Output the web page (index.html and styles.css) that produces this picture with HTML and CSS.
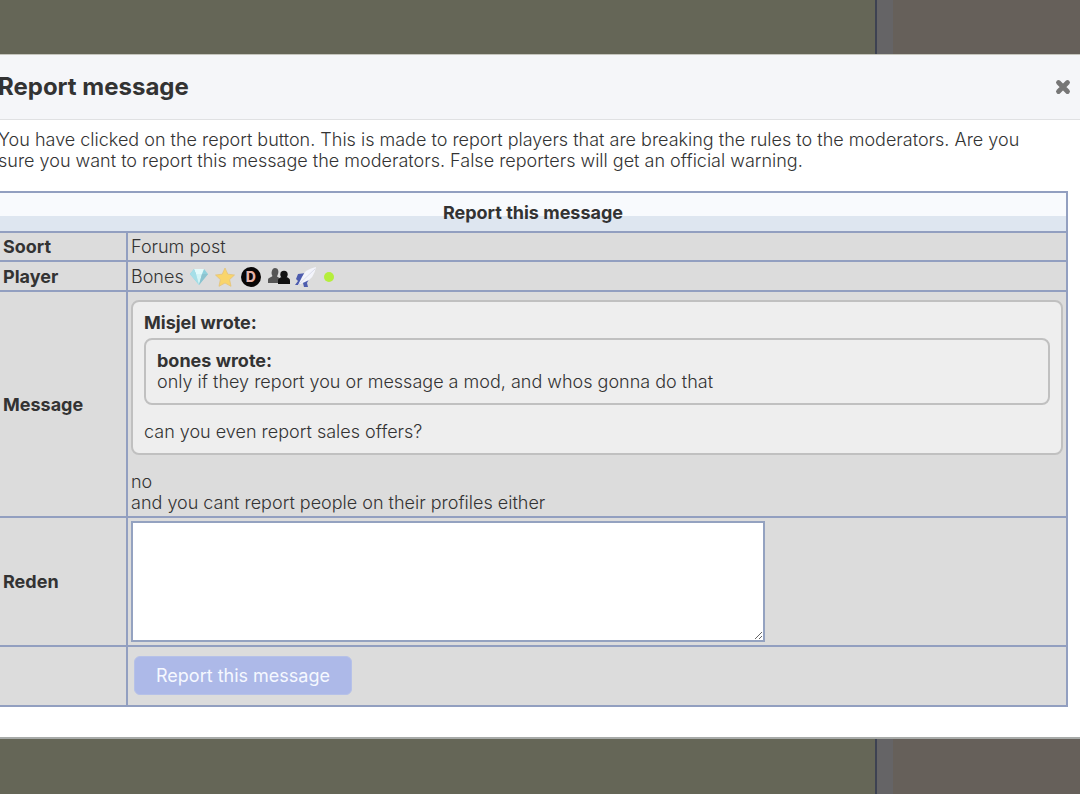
FILE: index.html
```
<!DOCTYPE html>
<html lang="en">
<head>
  <meta charset="UTF-8">
  <meta name="viewport" content="width=device-width, initial-scale=1.0">
  <title>Report message</title>
  <link rel="stylesheet" href="styles.css">
</head>

<body>
  <div class="page">
    <div class="page-content"></div>
    <div class="page-gutter"></div>
    <div class="page-side"></div>
  </div>

  <div class="overlay">
    <div class="modal" role="dialog" aria-labelledby="modal-title">
      <div class="modal-header">
        <h1 id="modal-title">Report message</h1>
        <button type="button" class="close" aria-label="Close">
          <svg width="16" height="16" viewBox="0 0 16 16">
            <path d="M3.500 3.500L12.500 12.500M12.500 3.500L3.500 12.500" stroke="#777" stroke-width="4.800" stroke-linecap="round"/>
          </svg>
        </button>
      </div>

      <form class="modal-body">
        <p>You have clicked on the report button. This is made to report players that are breaking the rules to the moderators. Are you<br>sure you want to report this message the moderators. False reporters will get an official warning.</p>

        <table>
          <thead>
            <tr><th colspan="2">Report this message</th></tr>
          </thead>
          <tbody>
            <tr>
              <th>Soort</th>
              <td>Forum post</td>
            </tr>
            <tr class="row-player">
              <th>Player</th>
              <td>
                <div class="player">
                  <span class="name">Bones</span>
                  <!-- diamond -->
                  <svg width="20" height="20" viewBox="0 0 20 20">
                    <path d="M5 2H15L19 7L10 18L1 7Z" fill="#8fd0dc"/>
                    <path d="M5 2H15L13 7H7Z" fill="#e4fafb"/>
                    <path d="M1 7L5 2L7 7L10 18Z" fill="#a5dfe8"/>
                    <path d="M7 7H13L10 18Z" fill="#d3f4f6"/>
                    <path d="M13 7H19L10 18Z" fill="#8cc3cf"/>
                  </svg>
                  <!-- star -->
                  <svg width="20" height="20" viewBox="0 0 20 20">
                    <path d="M10 1L12.8 7.2L19.5 8L14.6 12.6L16 19.3L10 16L4 19.3L5.4 12.6L.5 8L7.2 7.2Z" fill="#f9d56b" stroke="#e3c37b" stroke-width=".8" stroke-linejoin="round"/>
                  </svg>
                  <!-- donator -->
                  <span class="badge">D</span>
                  <!-- friends -->
                  <svg width="24" height="20" viewBox="0 0 24 20">
                    <path d="M8 1C11 1 12 4 11 7L10 9.500L12.500 11V16H1V13C1 10.500 4 10.500 5.500 9C3.500 6 5 1 8 1Z" fill="#555"/>
                    <circle cx="17" cy="7.500" r="3.700" fill="#111"/>
                    <path d="M15 10H19Q23 11 23 13.500V17H11V13.500Q11 11 15 10Z" fill="#111"/>
                  </svg>
                  <!-- feather -->
                  <svg class="feather" width="22" height="22" viewBox="0 0 22 22">
                    <path d="M3 8L11 7L8 13L14 13L12 17L13 21H9L8 17L5 17L4 19H0L3 15L1 13Z" fill="#4d5cae"/>
                    <path d="M21 1Q10 3 7 11L3 19L10 16Q19 13 21 1Z" fill="#f3f4fb"/>
                    <path d="M20 3L3 19" stroke="#d3d6e6" stroke-width=".8"/>
                  </svg>
                  <!-- online -->
                  <svg width="12" height="12" viewBox="0 0 12 12">
                    <circle cx="6" cy="6" r="5" fill="#b5ee3c"/>
                  </svg>
                </div>
              </td>
            </tr>
            <tr class="row-message">
              <th>Message</th>
              <td>
                <div class="quote">
                  <strong>Misjel wrote:</strong>
                  <div class="quote quote-inner">
                    <strong>bones wrote:</strong>
                    <div>only if they report you or message a mod, and whos gonna do that</div>
                  </div>
                  <div>can you even report sales offers?</div>
                </div>
                <div class="reply">no<br>and you cant report people on their profiles either</div>
              </td>
            </tr>
            <tr>
              <th><label for="reason">Reden</label></th>
              <td><textarea id="reason"></textarea></td>
            </tr>
            <tr>
              <th></th>
              <td class="cell-submit"><button type="button" class="submit">Report this message</button></td>
            </tr>
          </tbody>
        </table>
      </form>
    </div>
  </div>
</body>
</html>
```
FILE: styles.css
```
* {
  box-sizing: border-box;
}

body {
  font-family: Inter, "Noto Sans", sans-serif;
  font-size: 18px;
  font-weight: 300;
  line-height: 21px;
  margin: 0;
  color: #333;
}

.page {
  display: flex;
  min-height: 100vh;
}

.page-content {
  flex: 1;
  background: #656657;
  border-right: 2px solid #3d4252;
}

.page-gutter {
  width: 16px;
  background: #656466;
}

.page-side {
  width: 187px;
  background: #66605a;
}

.overlay {
  position: absolute;
  top: 0;
  left: 0;
  right: 0;
  padding-top: 54px;
}

.modal {
  background: #fff;
  border-top: 1px solid #c5c5bd;
  border-bottom: 2px solid #a7aaa8;
  margin-left: -2px;
}

.modal-header {
  display: flex;
  align-items: center;
  justify-content: space-between;
  height: 65px;
  padding-right: 8px;
  background: #f5f6f9;
  border-bottom: 1px solid #e0e1e3;
}

h1 {
  margin: 0;
  font-size: 24px;
  line-height: 28px;
  font-weight: 700;
}

.close {
  display: flex;
  padding: 1px;
  background: none;
  border: none;
  cursor: pointer;
}

.modal-body {
  padding: 9px 12px 30px 0;
}

p {
  margin: 0 0 20px;
}

table {
  width: 100%;
  border-collapse: collapse;
  background: #dcdcdc;
}

th,
td {
  border: 2px solid #929fc0;
  padding: 3px;
  text-align: left;
}

th,
strong {
  font-weight: 700;
}

tbody th {
  width: 128px;
}

thead th {
  height: 40px;
  text-align: center;
  background: linear-gradient(#f8fafd 60%, #dee6f0 60%);
}

.row-player {
  height: 30px;
}

.player {
  display: flex;
  align-items: center;
  gap: 6px;
  height: 21px;
}

.player svg,
.badge {
  margin-top: 2px;
}

.player .name {
  margin-right: -1px;
}

.player .feather {
  margin-left: -2px;
}

.badge {
  width: 20px;
  height: 20px;
  border-radius: 50%;
  background: #080606;
  color: #e5b3a9;
  font-size: 14px;
  font-weight: 800;
  line-height: 20px;
  text-align: center;
}

.row-message td {
  padding-top: 8px;
}

.quote {
  padding: 10px 11px 11px;
  background: #eee;
  border: 2px solid #c0c0c0;
  border-radius: 8px;
}

.quote strong {
  display: block;
}

.quote-inner {
  margin: 5px 0 16px;
}

.reply {
  margin-top: 16px;
}

textarea {
  display: block;
  width: 68%;
  height: 121px;
  font: inherit;
  background: #fff;
  border: 2px solid #94a2c0;
}

.cell-submit {
  padding: 9px 6px 10px;
}

.submit {
  display: block;
  height: 39px;
  padding: 0 21px;
  font: inherit;
  font-weight: 400;
  color: #f5f8ff;
  background: #adb9e8;
  border: 1px solid #b6c1e8;
  border-radius: 6px;
  cursor: pointer;
}
```
